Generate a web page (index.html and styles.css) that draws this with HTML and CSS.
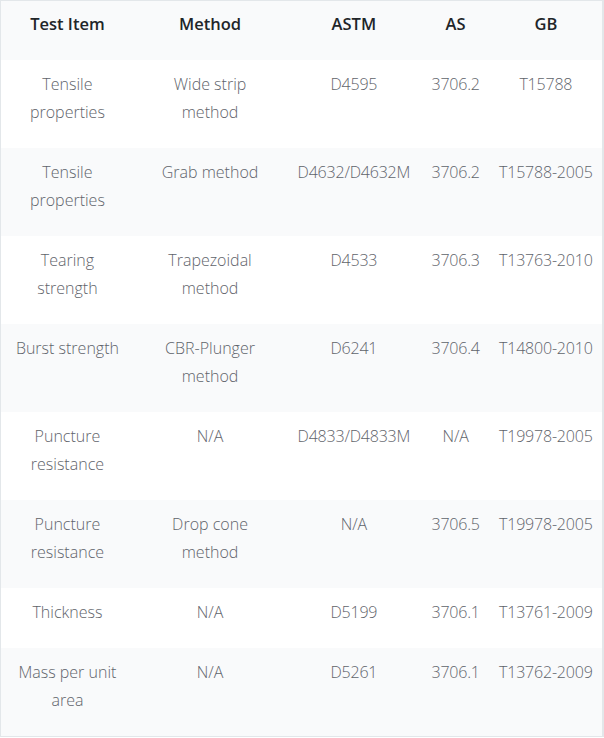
FILE: index.html
```html
<!DOCTYPE html>
<html lang="en">
<head>
<meta charset="utf-8">
<title>Test standards</title>
<link rel="stylesheet" href="styles.css">
</head>
<body>
<table class="spec-table">
  <colgroup>
    <col class="c-item">
    <col class="c-method">
    <col class="c-astm">
    <col class="c-as">
    <col class="c-gb">
  </colgroup>
  <thead>
    <tr>
      <th>Test Item</th>
      <th>Method</th>
      <th>ASTM</th>
      <th>AS</th>
      <th>GB</th>
    </tr>
  </thead>
  <tbody>
    <tr>
      <td>Tensile properties</td>
      <td>Wide strip method</td>
      <td class="code">D4595</td>
      <td class="code">3706.2</td>
      <td class="code">T15788</td>
    </tr>
    <tr>
      <td>Tensile properties</td>
      <td>Grab method</td>
      <td class="code">D4632/D4632M</td>
      <td class="code">3706.2</td>
      <td class="code">T15788-2005</td>
    </tr>
    <tr>
      <td>Tearing strength</td>
      <td>Trapezoidal method</td>
      <td class="code">D4533</td>
      <td class="code">3706.3</td>
      <td class="code">T13763-2010</td>
    </tr>
    <tr>
      <td>Burst strength</td>
      <td>CBR-Plunger method</td>
      <td class="code">D6241</td>
      <td class="code">3706.4</td>
      <td class="code">T14800-2010</td>
    </tr>
    <tr>
      <td>Puncture resistance</td>
      <td>N/A</td>
      <td class="code">D4833/D4833M</td>
      <td class="code">N/A</td>
      <td class="code">T19978-2005</td>
    </tr>
    <tr>
      <td>Puncture resistance</td>
      <td>Drop cone method</td>
      <td class="code">N/A</td>
      <td class="code">3706.5</td>
      <td class="code">T19978-2005</td>
    </tr>
    <tr>
      <td>Thickness</td>
      <td>N/A</td>
      <td class="code">D5199</td>
      <td class="code">3706.1</td>
      <td class="code">T13761-2009</td>
    </tr>
    <tr>
      <td>Mass per unit area</td>
      <td>N/A</td>
      <td class="code">D5261</td>
      <td class="code">3706.1</td>
      <td class="code">T13762-2009</td>
    </tr>
  </tbody>
</table>
</body>
</html>
```

FILE: styles.css
```css
html, body {
  margin: 0;
  padding: 0;
  background: #ffffff;
}

body {
  font-family: "Open Sans", "Noto Sans", sans-serif;
  font-size: 16px;
  color: #5f646b;
}

.spec-table {
  width: 604px;
  table-layout: fixed;
  border-collapse: collapse;
  border: 1px solid #e3e7ea;
  border-right-width: 2px;
}

.c-item { width: 133px; }
.c-method { width: 152px; }
.c-astm { width: 135px; }
.c-as { width: 68px; }
.c-gb { width: 113px; }

.spec-table th {
  font-size: 16.5px;
  font-weight: 600;
  color: #212529;
  line-height: 28px;
  padding: 9px 6px 22px;
  text-align: center;
  background: #f9fafb;
}

.spec-table td {
  font-weight: 300;
  line-height: 28px;
  padding: 10px 12px 22px;
  text-align: center;
  vertical-align: top;
}

.spec-table td.code {
  white-space: nowrap;
  padding-left: 2px;
  padding-right: 2px;
  letter-spacing: -0.2px;
}

.spec-table tbody tr:nth-child(even) td {
  background: #f9fafb;
}
```
